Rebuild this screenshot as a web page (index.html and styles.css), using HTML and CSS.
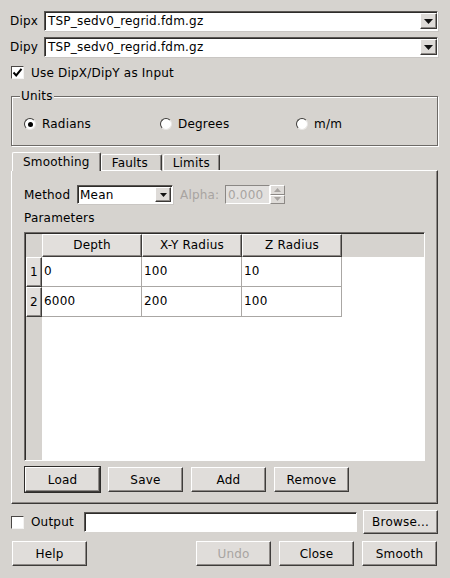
FILE: index.html
```html
<!DOCTYPE html>
<html>
<head>
<meta charset="utf-8">
<link rel="stylesheet" href="styles.css">
</head>
<body>
<div class="dialog">
  <div class="field-row">
    <span class="field-label">Dipx</span>
    <div class="combo wide">
      <span class="combo-text">TSP_sedv0_regrid.fdm.gz</span>
      <span class="combo-btn"><svg width="9" height="5" viewBox="0 0 9 5"><path d="M0 0H9L4.5 5Z" fill="#111"/></svg></span>
    </div>
  </div>
  <div class="field-row second">
    <span class="field-label">Dipy</span>
    <div class="combo wide">
      <span class="combo-text">TSP_sedv0_regrid.fdm.gz</span>
      <span class="combo-btn"><svg width="9" height="5" viewBox="0 0 9 5"><path d="M0 0H9L4.5 5Z" fill="#111"/></svg></span>
    </div>
  </div>
  <div class="check-row use-row">
    <span class="checkbox"><svg width="11" height="11" viewBox="0 0 11 11"><path d="M1.5 5.5L4.2 8.4L9.5 1.8" fill="none" stroke="#000" stroke-width="2"/></svg></span>
    <span class="check-text">Use DipX/DipY as Input</span>
  </div>

  <fieldset class="group">
    <legend class="group-title">Units</legend>
    <div class="radio-row">
      <label class="radio-item"><span class="radio on"></span>Radians</label>
      <label class="radio-item"><span class="radio"></span>Degrees</label>
      <label class="radio-item"><span class="radio"></span>m/m</label>
    </div>
  </fieldset>

  <div class="tabbar">
    <span class="tab active">Smoothing</span>
    <span class="tab">Faults</span>
    <span class="tab">Limits</span>
    <span class="tab-fill"></span>
  </div>
  <div class="panel">
    <div class="method-row">
      <span class="method-label">Method</span>
      <div class="combo method-combo">
        <span class="combo-text">Mean</span>
        <span class="combo-btn small"><svg width="7" height="4" viewBox="0 0 7 4"><path d="M0 0H7L3.5 4Z" fill="#111"/></svg></span>
      </div>
      <span class="alpha-label">Alpha:</span>
      <div class="spin-input"><span class="spin-text">0.000</span></div>
      <div class="spinner">
        <span class="spin-btn"><svg width="7" height="4" viewBox="0 0 7 4"><path d="M0 4H7L3.5 0Z" fill="#a8a4a1"/></svg></span>
        <span class="spin-btn"><svg width="7" height="4" viewBox="0 0 7 4"><path d="M0 0H7L3.5 4Z" fill="#a8a4a1"/></svg></span>
      </div>
    </div>
    <div class="params-label">Parameters</div>
    <div class="table">
      <div class="corner"></div>
      <div class="col-head">Depth</div>
      <div class="col-head">X-Y Radius</div>
      <div class="col-head">Z Radius</div>
      <div class="head-fill"></div>

      <div class="row-head">1</div>
      <div class="cell">0</div>
      <div class="cell">100</div>
      <div class="cell">10</div>
      <div class="cell-fill"></div>

      <div class="row-head">2</div>
      <div class="cell">6000</div>
      <div class="cell">200</div>
      <div class="cell">100</div>
      <div class="cell-fill"></div>

      <div class="rowhead-fill"></div>
      <div class="body-fill"></div>
    </div>
    <div class="button-row">
      <button class="btn default">Load</button>
      <button class="btn">Save</button>
      <button class="btn">Add</button>
      <button class="btn">Remove</button>
    </div>
  </div>

  <div class="output-row">
    <span class="checkbox"></span>
    <span class="check-text output-text">Output</span>
    <div class="text-input"></div>
    <button class="btn browse">Browse...</button>
  </div>

  <div class="bottom-row">
    <button class="btn help">Help</button>
    <span class="spacer"></span>
    <button class="btn" disabled>Undo</button>
    <button class="btn">Close</button>
    <button class="btn">Smooth</button>
  </div>
</div>
</body>
</html>
```

FILE: styles.css
```css
html, body {
  margin: 0;
  padding: 0;
  background: #d6d3cf;
}
body {
  width: 450px;
  height: 578px;
  overflow: hidden;
  font-family: "DejaVu Sans", sans-serif;
  font-size: 12px;
  letter-spacing: 0.2px;
  color: #000;
}
.dialog {
  display: flex;
  flex-direction: column;
  padding: 11px 12px 0 11px;
}

/* top file choosers */
.field-row {
  display: flex;
  align-items: center;
  height: 20px;
}
.field-row.second { margin-top: 6px; }
.field-label {
  width: 33px;
  line-height: 14px;
  margin-left: -1px;
}
.combo {
  box-sizing: border-box;
  display: flex;
  align-items: center;
  background: #fff;
  border-top: 1px solid #5a5754;
  border-left: 1px solid #5a5754;
  border-right: 1px solid #fff;
  border-bottom: 1px solid #fff;
  box-shadow: inset 1px 1px 0 #2e2c2a, 1px 1px 0 #c9c6c3;
}
.combo.wide {
  flex: 1;
  height: 20px;
  margin-left: 1px;
}
.combo-text {
  flex: 1;
  padding-left: 3px;
  line-height: 14px;
  white-space: nowrap;
}
.combo-btn {
  box-sizing: border-box;
  width: 17px;
  height: 16px;
  display: flex;
  align-items: center;
  justify-content: center;
  background: #dedbd8;
  border-top: 1px solid #fff;
  border-left: 1px solid #fff;
  border-right: 1px solid #3a3836;
  border-bottom: 1px solid #3a3836;
  box-shadow: inset -1px -1px 0 #8d8986;
}
.combo-btn.small {
  width: 16px;
  height: 15px;
  margin-right: 1px;
}

/* checkboxes */
.check-row {
  display: flex;
  align-items: center;
}
.use-row { margin-top: 9px; height: 13px; }
.checkbox {
  box-sizing: border-box;
  width: 13px;
  height: 13px;
  background: #fff;
  border-top: 1px solid #4a4745;
  border-left: 1px solid #4a4745;
  border-right: 1px solid #f4f3f2;
  border-bottom: 1px solid #f4f3f2;
  display: flex;
  align-items: center;
  justify-content: center;
}
.check-text {
  margin-left: 7px;
  line-height: 14px;
}

/* Units group */
.group {
  margin: 10px 0 0 0;
  padding: 14px 0 14px 9px;
  border: 1px solid #6d6a67;
  box-shadow: inset 1px 1px 0 #fff, 1px 1px 0 #fff;
  min-width: 0;
}
.group-title {
  padding: 0 1px;
  line-height: 14px;
  background: #d6d3cf;
  margin-left: -1px;
}
.radio-row {
  display: grid;
  grid-template-columns: 136px 136px 136px;
  margin-left: 3px;
}
.radio-item {
  display: flex;
  align-items: center;
  line-height: 14px;
}
.radio {
  box-sizing: border-box;
  width: 12px;
  height: 12px;
  border-radius: 50%;
  background: #fff;
  border: 1px solid;
  border-color: #3c3a38 #e8e6e4 #e8e6e4 #3c3a38;
  margin-right: 6px;
  display: flex;
  align-items: center;
  justify-content: center;
}
.radio.on::after {
  content: "";
  width: 5px;
  height: 5px;
  border-radius: 50%;
  background: #000;
}

/* tabs */
.tabbar {
  display: flex;
  align-items: flex-end;
  margin-top: 6px;
  height: 19px;
}
.tab {
  box-sizing: border-box;
  height: 17px;
  padding: 0 9px 0 10px;
  line-height: 16px;
  border-top: 1px solid #fff;
  border-left: 1px solid #fff;
  border-right: 1px solid #3a3836;
  border-bottom: 1px solid #fff;
  box-shadow: inset -1px 0 0 #8d8986;
  border-radius: 2px 2px 0 0;
}
.tab.active {
  height: 19px;
  margin-left: 1px;
  border-bottom: none;
  padding: 0 10px;
  line-height: 18px;
}
.tab:nth-child(2) { width: 61px; }
.tab:nth-child(3) { width: 57px; margin-left: 1px; padding-left: 9px; }
.tab-fill {
  flex: 1;
  height: 0;
  border-bottom: 1px solid #fff;
  border-right: 1px solid #3a3836;
  margin-left: -1px;
}

/* panel */
.panel {
  box-sizing: border-box;
  height: 333px;
  border-left: 1px solid #fff;
  border-right: 1px solid #3a3836;
  border-bottom: 1px solid #3a3836;
  box-shadow: inset -1px -1px 0 #8d8986;
  padding: 14px 12px 0 12px;
  display: flex;
  flex-direction: column;
}
.method-row {
  display: flex;
  align-items: center;
  height: 19px;
}
.method-label {
  width: 53px;
  line-height: 14px;
}
.method-combo {
  width: 96px;
  height: 19px;
}
.method-combo .combo-text { padding-left: 2px; }
.alpha-label {
  color: #a8a4a1;
  margin-left: 7px;
  width: 45px;
  line-height: 14px;
}
.spin-input {
  box-sizing: border-box;
  width: 45px;
  height: 19px;
  background: #e2e0de;
  border-top: 1px solid #8a8784;
  border-left: 1px solid #8a8784;
  border-right: 1px solid #fff;
  border-bottom: 1px solid #fff;
  display: flex;
  align-items: center;
}
.spin-text {
  color: #a8a4a1;
  padding-left: 2px;
  line-height: 14px;
}
.spinner {
  display: flex;
  flex-direction: column;
  width: 15px;
  height: 19px;
}
.spin-btn {
  box-sizing: border-box;
  flex: 1;
  display: flex;
  align-items: center;
  justify-content: center;
  background: #dedbd8;
  border-top: 1px solid #fff;
  border-left: 1px solid #fff;
  border-right: 1px solid #8d8986;
  border-bottom: 1px solid #8d8986;
}
.params-label {
  margin-top: 7px;
  line-height: 14px;
}

/* table */
.table {
  box-sizing: border-box;
  margin-top: 7px;
  height: 229px;
  display: grid;
  grid-template-columns: 16px 100px 100px 100px 1fr;
  grid-template-rows: 23px 30px 30px 1fr;
  border-top: 1px solid #6e6a67;
  border-left: 1px solid #6e6a67;
  border-right: 1px solid #fff;
  border-bottom: 1px solid #fff;
  box-shadow: inset 1px 1px 0 #2e2c2a;
  padding: 1px 0 0 1px;
}
.corner { background: #d6d3cf; }
.col-head {
  box-sizing: border-box;
  background: #e2dfdc;
  border-top: 1px solid #fff;
  border-left: 1px solid #fff;
  border-right: 1px solid #3e3c3a;
  border-bottom: 1px solid #3e3c3a;
  box-shadow: inset -1px -1px 0 #8d8986;
  text-align: center;
  line-height: 20px;
}
.head-fill { background: #d6d3cf; }
.row-head {
  box-sizing: border-box;
  background: #e2dfdc;
  border-top: 1px solid #fff;
  border-left: 1px solid #fff;
  border-right: 1px solid #3e3c3a;
  border-bottom: 1px solid #3e3c3a;
  box-shadow: inset -1px -1px 0 #8d8986;
  text-align: center;
  line-height: 28px;
}
.cell {
  box-sizing: border-box;
  background: #fff;
  border-right: 1px solid #aaa7a4;
  border-bottom: 1px solid #aaa7a4;
  padding-left: 2px;
  line-height: 29px;
}
.cell-fill { background: #fff; }
.rowhead-fill { background: #d6d3cf; }
.body-fill {
  grid-column: 2 / 6;
  background: #fff;
}

/* buttons */
.button-row {
  display: flex;
  gap: 8px;
  margin-top: 6px;
  padding-left: 1px;
}
.btn {
  box-sizing: border-box;
  width: 75px;
  height: 25px;
  padding: 0;
  margin: 0;
  font-family: "DejaVu Sans", sans-serif;
  font-size: 12px;
  letter-spacing: 0.2px;
  color: #000;
  background: #e0ddda;
  border-top: 1px solid #fff;
  border-left: 1px solid #fff;
  border-right: 1px solid #3e3c3a;
  border-bottom: 1px solid #3e3c3a;
  box-shadow: inset -1px -1px 0 #8d8986;
  border-radius: 0;
  line-height: 22px;
}
.btn.default { outline: 1px solid #2e2c2a; }
.btn:disabled { color: #a8a4a1; }

/* output row */
.output-row {
  display: flex;
  align-items: center;
  margin-top: 6px;
  height: 24px;
}
.output-text { width: 53px; margin-left: 7px; }
.text-input {
  box-sizing: border-box;
  width: 274px;
  height: 20px;
  background: #fff;
  border-top: 1px solid #5a5754;
  border-left: 1px solid #5a5754;
  border-right: 1px solid #fff;
  border-bottom: 1px solid #fff;
  box-shadow: inset 1px 1px 0 #2e2c2a;
}
.browse {
  margin-left: 6px;
  height: 24px;
}

.bottom-row {
  display: flex;
  gap: 8px;
  margin-top: 7px;
  padding-left: 1px;
  padding-right: 1px;
}
.spacer { flex: 1; }
```
